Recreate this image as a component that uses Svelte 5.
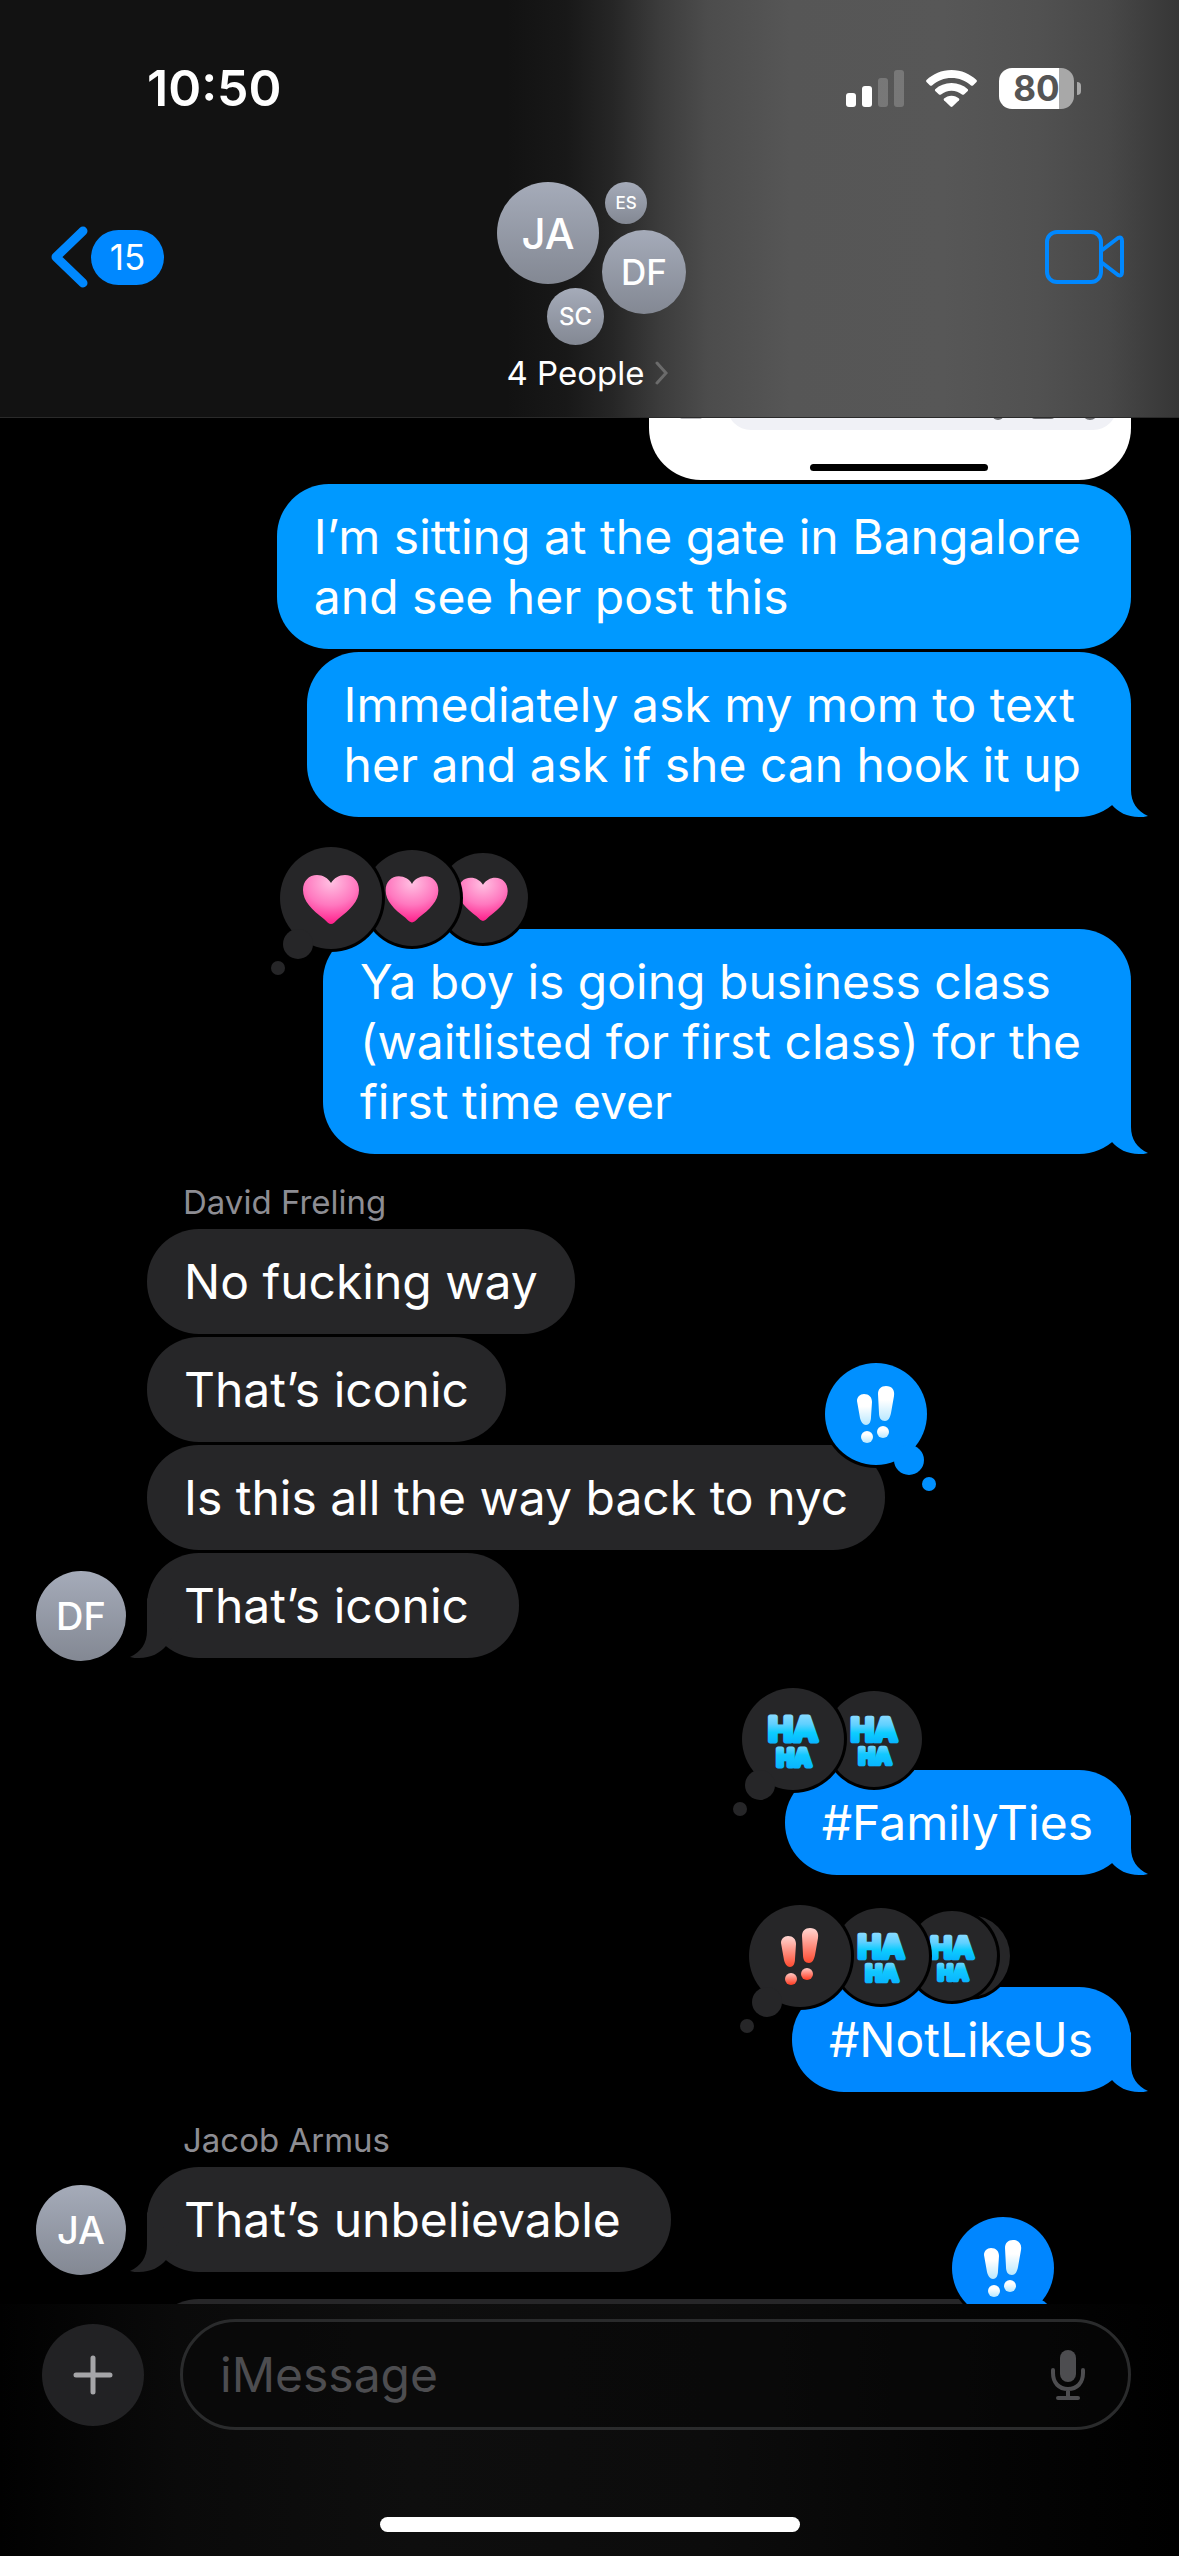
<script lang="ts">
  type Reaction = "heart" | "haha" | "emphasis" | "blank";

  interface Message {
    lines: string[];
    tone?: string;
    tail?: boolean;
    reactions?: Reaction[];
  }

  interface Group {
    sent: boolean;
    sender?: string;
    initials?: string;
    messages: Message[];
  }

  // centre and radius of each bubble in a row of tapbacks
  const slots = [
    { x: 51, r: 51 },
    { x: 132, r: 48 },
    { x: 203, r: 45 },
    { x: 220, r: 41 }
  ];

  const groups: Group[] = [
    {
      sent: true,
      messages: [
        {
          lines: ["I’m sitting at the gate in Bangalore", "and see her post this"],
          tone: "#0099ff"
        },
        {
          lines: ["Immediately ask my mom to text", "her and ask if she can hook it up"],
          tone: "#0096ff",
          tail: true
        }
      ]
    },
    {
      sent: true,
      messages: [
        {
          lines: [
            "Ya boy is going business class",
            "(waitlisted for first class) for the",
            "first time ever"
          ],
          tone: "#0092ff",
          tail: true,
          reactions: ["heart", "heart", "heart"]
        }
      ]
    },
    {
      sent: false,
      sender: "David Freling",
      initials: "DF",
      messages: [
        { lines: ["No fucking way"] },
        { lines: ["That’s iconic"] },
        {
          lines: ["Is this all the way back to nyc"],
          tone: "#0090ff",
          reactions: ["emphasis"]
        },
        { lines: ["That’s iconic"], tail: true }
      ]
    },
    {
      sent: true,
      messages: [
        {
          lines: ["#FamilyTies"],
          tone: "#008bff",
          tail: true,
          reactions: ["haha", "haha"]
        }
      ]
    },
    {
      sent: true,
      messages: [
        {
          lines: ["#NotLikeUs"],
          tone: "#0088ff",
          tail: true,
          reactions: ["emphasis", "haha", "haha", "blank"]
        }
      ]
    },
    {
      sent: false,
      sender: "Jacob Armus",
      initials: "JA",
      messages: [{ lines: ["That’s unbelievable"], tail: true }]
    }
  ];

  let draft = $state("");
</script>

{#snippet glyph(kind: Reaction, light: boolean)}
  {#if kind === "heart"}
    <path
      d="M0 26C-2 26-4 24-7 21C-19 12-28 3-28-8C-28-17-22-23-14-23C-8-23-3-20 0-15C3-20 8-23 14-23C22-23 28-17 28-8C28 3 19 12 7 21C4 24 2 26 0 26Z"
      fill="url(#heart-fill)"
    />
  {:else if kind === "haha"}
    <text class="haha" fill="url(#haha-fill)" stroke="url(#haha-fill)" text-anchor="middle"
      ><tspan x="0" y="2" font-size="33">HA</tspan><tspan x="1" y="27" font-size="23">HA</tspan></text
    >
  {:else if kind === "emphasis"}
    <g fill={light ? "url(#emphasis-light)" : "url(#emphasis-red)"}>
      <path d="M-19-13C-19-17-16-20-12-20C-7-20-4-17-4-12L-5 3C-5 8-7 11-10 11C-13 11-15 8-16 4Z" />
      <path d="M2-20C2-25 5-28 10-28C16-28 19-24 18-18L15-1C14 4 12 7 9 7C5 7 3 4 3-1Z" />
    </g>
    <g fill={light ? "url(#dot-light)" : "url(#dot-red)"}>
      <circle cx="-9" cy="23" r="6" />
      <circle cx="7" cy="18" r="6" />
    </g>
  {/if}
{/snippet}

{#snippet tapbacks(reactions: Reaction[], fromMe: boolean)}
  <svg class="tapbacks" class:mine={fromMe} width="102" height="102" viewBox="0 0 102 102" aria-hidden="true">
    {#each reactions.map((kind, i) => ({ kind, slot: slots[i] })).reverse() as { kind, slot }}
      <circle class="ring" cx={slot.x} cy="51" r={slot.r + 3} />
      <circle class="puff" cx={slot.x} cy="51" r={slot.r} />
      <g transform={`translate(${slot.x} 51) scale(${slot.r / 51})`}>
        {@render glyph(kind, fromMe)}
      </g>
    {/each}
    <circle class="puff" cx={fromMe ? 84 : 18} cy="97" r="15" />
    <circle class="puff" cx={fromMe ? 104 : -2} cy="121" r="7" />
  </svg>
{/snippet}

<svg class="defs" width="0" height="0" aria-hidden="true">
  <defs>
    <radialGradient id="heart-fill" cx="0.5" cy="0.15" r="0.85">
      <stop offset="0" stop-color="#ffc0e2" />
      <stop offset="0.55" stop-color="#ff78bf" />
      <stop offset="1" stop-color="#ff1f8b" />
    </radialGradient>
    <linearGradient id="haha-fill" gradientUnits="userSpaceOnUse" x1="0" y1="-26" x2="0" y2="30">
      <stop offset="0" stop-color="#8fdcff" />
      <stop offset="0.2" stop-color="#5fd0ff" />
      <stop offset="0.35" stop-color="#0ccdff" />
      <stop offset="0.54" stop-color="#08b4ff" />
      <stop offset="0.58" stop-color="#7ad6ff" />
      <stop offset="0.75" stop-color="#12c8ff" />
      <stop offset="1" stop-color="#08b4ff" />
    </linearGradient>
    <linearGradient id="emphasis-light" x1="0" y1="0" x2="0" y2="1">
      <stop offset="0.4" stop-color="#ffffff" />
      <stop offset="1" stop-color="#b9e8ff" />
    </linearGradient>
    <linearGradient id="dot-light" x1="0" y1="0" x2="0" y2="1">
      <stop offset="0.3" stop-color="#ffffff" />
      <stop offset="1" stop-color="#b9e8ff" />
    </linearGradient>
    <linearGradient id="emphasis-red" x1="0" y1="0" x2="0" y2="1">
      <stop offset="0" stop-color="#ffd6d2" />
      <stop offset="1" stop-color="#ff4a30" />
    </linearGradient>
    <linearGradient id="dot-red" x1="0" y1="0" x2="0" y2="1">
      <stop offset="0" stop-color="#ffc9c4" />
      <stop offset="1" stop-color="#ff3a20" />
    </linearGradient>
  </defs>
</svg>

<main class="screen">
  <header class="top">
    <div class="status">
      <time>10:50</time>
      <div class="indicators">
        <svg width="58" height="37" viewBox="0 0 58 37" fill="#fff" aria-label="Signal">
          <rect x="0" y="23" width="10" height="14" rx="3" />
          <rect x="16" y="16" width="10" height="21" rx="3" />
          <rect x="32" y="8" width="10" height="29" rx="3" opacity="0.2" />
          <rect x="48" y="0" width="10" height="37" rx="3" opacity="0.2" />
        </svg>
        <svg width="51" height="37" viewBox="0 0 51 37" fill="#fff" aria-label="Wi-Fi">
          <path d="M25.500 0C35.500 0 44 4 50.500 10Q51.300 11 50.500 12L47 15.500Q46 16 45 15.500C39.500 10.500 33 8 25.500 8S11.500 10.500 6 15.500Q5 16 4 15.500L.5 12Q-.3 11 .5 10C7 4 15.500 0 25.500 0Z" />
          <path d="M25.500 13C32 13 37.500 15.300 41.800 19.200Q42.500 20 41.800 21L38 24.500Q37 25.200 36 24.500C33 22 29.500 20.700 25.500 20.700S18 22 15 24.500Q14 25.200 13 24.500L9.200 21Q8.500 20 9.200 19.200C13.500 15.300 19 13 25.500 13Z" />
          <path d="M25.500 25.700C28.500 25.700 31 26.800 33 28.500Q33.700 29.300 33 30.200L26.500 36.500Q25.500 37.300 24.500 36.500L18 30.200Q17.300 29.300 18 28.500C20 26.800 22.500 25.700 25.500 25.700Z" />
        </svg>
        <div class="battery"><span>80</span></div>
      </div>
    </div>

    <nav class="bar">
      <button class="back" aria-label="Back, 15 unread">
        <svg width="38" height="62" viewBox="0 0 38 62" fill="none" stroke="#0088ff" stroke-width="9" stroke-linecap="round" stroke-linejoin="round" aria-hidden="true">
          <path d="M33 5L6 31L33 57" />
        </svg>
        <span class="unread">15</span>
      </button>

      <button class="people">
        <span class="cluster">
          <span class="avatar one">JA</span>
          <span class="avatar two">ES</span>
          <span class="avatar three">DF</span>
          <span class="avatar four">SC</span>
        </span>
        <span class="label">
          4 People
          <svg width="13" height="24" viewBox="0 0 13 24" fill="none" stroke="#6b6b6b" stroke-width="3" stroke-linecap="round" aria-hidden="true">
            <path d="M2 2L11 12L2 22" />
          </svg>
        </span>
      </button>

      <button class="video" aria-label="FaceTime">
        <svg width="80" height="54" viewBox="0 0 80 54" fill="none" stroke="#0088ff" stroke-width="4" stroke-linejoin="round" aria-hidden="true">
          <rect x="2" y="2" width="54" height="50" rx="10" />
          <path d="M56 21L73 8Q77 6 77 11V42Q77 47 73 45L56 32" />
        </svg>
      </button>
    </nav>
  </header>

  <section class="thread" aria-label="Messages">
    <div class="photo">
      <svg class="photo-field" width="452" height="12" viewBox="0 0 452 12" aria-hidden="true">
        <rect x="62" y="-40" width="390" height="52" rx="24" fill="#f0f1f6" />
        <g fill="#6f7074">
          <rect x="15" y="-4" width="22" height="5" rx="2" fill="#b9b9bc" />
          <circle cx="333" cy="-4" r="6" />
          <rect x="366" y="-8" width="24" height="9" rx="4" />
          <circle cx="425" cy="-6" r="8" />
        </g>
      </svg>
      <div class="photo-home"></div>
    </div>

    {#each groups as group}
      <div class="group" class:sent={group.sent} class:reacted={group.sent && group.messages[0].reactions}>
        {#if group.sender}
          <div class="sender">{group.sender}</div>
        {/if}
        {#each group.messages as message}
          <div class="row">
            {#if message.tail && group.initials}
              <span class="avatar small">{group.initials}</span>
            {/if}
            <div
              class="bubble"
              class:tailed={message.tail}
              class:wrapped={message.lines.length > 1}
              style:--tone={message.tone}
            >
              {#each message.lines as line}
                <div>{line}</div>
              {/each}
              {#if message.tail}
                <svg class="tail" width="50" height="60" viewBox="-32 -60 50 60" aria-hidden="true">
                  <path d="M0-60V-27C0-15 6-6 17-1C14 0 11 0 8 0C-4 0-13-5-19-12L-32-30Z" />
                </svg>
              {/if}
              {#if message.reactions}
                {@render tapbacks(message.reactions, !group.sent)}
              {/if}
            </div>
          </div>
        {/each}
      </div>
    {/each}

    <div class="group next">
      <div class="row">
        <div class="bubble cut" style:--tone="#0086ff">
          {@render tapbacks(["emphasis"], true)}
        </div>
      </div>
    </div>
  </section>

  <footer class="composer">
    <form class="entry" onsubmit={(e) => e.preventDefault()}>
      <button class="plus" type="button" aria-label="Add">
        <svg width="40" height="40" viewBox="0 0 40 40" stroke="#a5a5a8" stroke-width="5" stroke-linecap="round" aria-hidden="true">
          <path d="M20 3V37M3 20H37" />
        </svg>
      </button>
      <div class="field">
        <input type="text" placeholder="iMessage" aria-label="iMessage" bind:value={draft} />
        <button class="mic" type="button" aria-label="Dictate">
          <svg width="36" height="50" viewBox="0 0 36 50" fill="none" stroke="#4d4d50" stroke-width="4" stroke-linecap="round" aria-hidden="true">
            <rect x="10" y="0" width="16" height="32" rx="8" fill="#4d4d50" stroke="none" />
            <path d="M3 20V23C3 33 9 39 18 39S33 33 33 23V20M18 39V47M8 48H28" />
          </svg>
        </button>
      </div>
    </form>
    <div class="home"></div>
  </footer>
</main>

<style>
  :global(body) {
    margin: 0;
    background: #000;
  }

  .defs {
    position: absolute;
  }

  .screen {
    display: flex;
    flex-direction: column;
    height: 100vh;
    overflow: hidden;
    background: #000;
    color: #fff;
    font-family: Inter, "Liberation Sans", sans-serif;
  }

  button {
    padding: 0;
    border: 0;
    background: none;
    color: inherit;
    font: inherit;
  }

  svg {
    display: block;
    flex: none;
  }

  .top {
    flex: none;
    border-bottom: 1px solid #2a2a2a;
    background: linear-gradient(
      90deg,
      #121212 0%,
      #121212 43%,
      #181818 48%,
      #262626 52%,
      #3c3c3c 56%,
      #4c4c4c 60%,
      #565656 67%,
      #575757 80%,
      #515151 88%,
      #484848 94%,
      #363636 100%
    );
  }

  .status {
    display: flex;
    justify-content: space-between;
    align-items: center;
    padding: 58px 105px 0 147px;
    height: 60px;
  }

  time {
    font-size: 50px;
    font-weight: 600;
    line-height: 60px;
  }

  .indicators {
    display: flex;
    align-items: center;
    gap: 22px;
  }

  .battery {
    position: relative;
    width: 75px;
    height: 41px;
    border-radius: 13px;
    background: linear-gradient(90deg, #fff 80%, #a8a8a8 80%);
    color: #555;
    font-size: 35px;
    font-weight: 700;
    line-height: 41px;
    text-align: center;
  }

  .battery::after {
    content: "";
    position: absolute;
    right: -7px;
    top: 14px;
    width: 4px;
    height: 13px;
    border-radius: 0 4px 4px 0;
    background: #a8a8a8;
  }

  .bar {
    display: grid;
    grid-template-columns: 1fr auto 1fr;
    align-items: start;
    padding: 64px 54px 24px 50px;
  }

  .back {
    display: flex;
    align-items: center;
    gap: 3px;
    margin-top: 44px;
    justify-self: start;
  }

  .unread {
    min-width: 73px;
    border-radius: 28px;
    background: #0088ff;
    font-size: 35px;
    line-height: 55px;
    text-align: center;
  }

  .people {
    display: flex;
    flex-direction: column;
    align-items: center;
    gap: 8px;
  }

  .cluster {
    position: relative;
    width: 189px;
    height: 163px;
    margin-left: 8px;
  }

  .label {
    display: flex;
    align-items: center;
    gap: 11px;
    font-size: 33px;
    line-height: 40px;
  }

  .video {
    margin-top: 48px;
    justify-self: end;
  }

  .avatar {
    display: grid;
    place-items: center;
    border-radius: 50%;
    background: linear-gradient(#a5abb9, #838893);
    font-weight: 500;
  }

  .cluster .avatar {
    position: absolute;
  }

  .one {
    left: 0;
    top: 0;
    width: 102px;
    height: 102px;
    font-size: 42px;
  }

  .two {
    left: 108px;
    top: 0;
    width: 42px;
    height: 42px;
    font-size: 17px;
  }

  .three {
    right: 0;
    top: 48px;
    width: 84px;
    height: 84px;
    font-size: 35px;
  }

  .four {
    left: 50px;
    bottom: 0;
    width: 57px;
    height: 57px;
    font-size: 24px;
  }

  .thread {
    flex: 1;
    min-height: 0;
    overflow: hidden;
    font-size: 48px;
    line-height: 60px;
  }

  .photo {
    display: flex;
    flex-direction: column;
    align-items: center;
    width: 482px;
    height: 62px;
    margin: 0 48px 4px auto;
    border-radius: 0 0 52px 52px;
    background: #fff;
  }

  .photo-field {
    align-self: flex-end;
    margin-right: 14px;
  }

  .photo-home {
    width: 178px;
    height: 7px;
    margin-top: 34px;
    margin-left: 18px;
    border-radius: 4px;
    background: #000;
  }

  .group {
    display: flex;
    flex-direction: column;
    gap: 3px;
    padding: 0 48px 0 36px;
  }

  .group.reacted {
    margin-top: 112px;
  }

  .sender {
    margin: 30px 0 6px 147px;
    color: #8d8d93;
    font-size: 33px;
    line-height: 36px;
  }

  .row {
    display: flex;
    align-items: flex-end;
    padding-left: 111px;
  }

  .sent .row {
    justify-content: flex-end;
  }

  .small {
    flex: none;
    width: 90px;
    height: 90px;
    margin: 0 21px -3px -111px;
    font-size: 38px;
    line-height: 90px;
  }

  .bubble {
    position: relative;
    padding: 23px 37px 22px;
    border-radius: 52px;
    background: #262628;
    white-space: nowrap;
  }

  .bubble.tailed {
    padding-right: 50px;
  }

  .sent .bubble {
    padding-right: 38px;
    background: var(--tone);
  }

  .sent .bubble.wrapped {
    padding-right: 50px;
  }

  .tail {
    position: absolute;
    left: -18px;
    bottom: 0;
    transform: scaleX(-1);
    fill: #262628;
  }

  .sent .tail {
    left: auto;
    right: -18px;
    transform: none;
    fill: var(--tone);
  }

  .tapbacks {
    position: absolute;
    left: -43px;
    top: -82px;
    overflow: visible;
  }

  .tapbacks.mine {
    left: auto;
    right: -42px;
  }

  /* the thick round stroke puffs the letters up like balloons */
  .haha {
    font-weight: 700;
    stroke-width: 5px;
    stroke-linejoin: round;
  }

  .ring {
    fill: #000;
  }

  .puff {
    fill: #262628;
  }

  .mine .puff {
    fill: var(--tone);
  }

  .next {
    margin-top: 27px;
  }

  .cut {
    width: 791px;
    height: 60px;
  }

  .composer {
    flex: none;
    background: linear-gradient(90deg, #010101, #0a0a0a 15%, #0e0e0e 35%, #0c0c0c 60%, #040404 85%, #000);
  }

  .entry {
    display: flex;
    align-items: center;
    gap: 36px;
    padding: 15px 48px 0 42px;
  }

  .plus {
    display: grid;
    flex: none;
    place-items: center;
    width: 102px;
    height: 102px;
    border-radius: 50%;
    background: #222224;
  }

  .field {
    display: flex;
    flex: 1;
    align-items: center;
    height: 105px;
    padding: 0 42px 0 37px;
    border: 3px solid #2a2b2c;
    border-radius: 56px;
    background: #08080899;
  }

  input {
    flex: 1;
    min-width: 0;
    padding: 0;
    border: 0;
    outline: 0;
    background: none;
    color: #fff;
    font: inherit;
    font-size: 48px;
    line-height: 60px;
  }

  input::placeholder {
    color: #4d4d50;
    opacity: 1;
  }

  .home {
    width: 420px;
    height: 15px;
    margin: 87px auto 24px;
    border-radius: 8px;
    background: #fff;
  }
</style>
